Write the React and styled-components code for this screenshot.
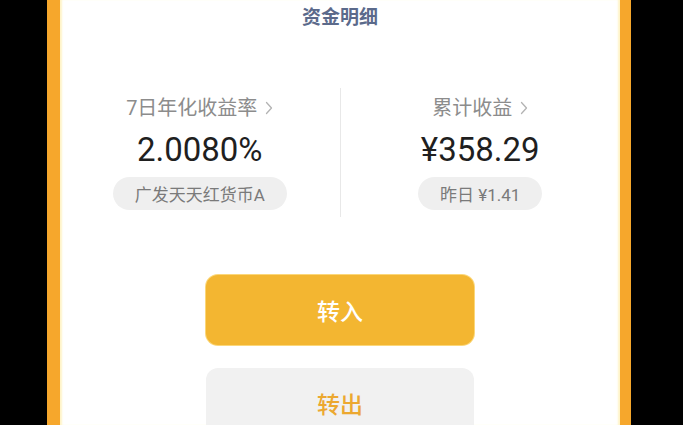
import React from 'react';
import styled, { createGlobalStyle } from 'styled-components';

const GlobalStyle = createGlobalStyle`
	html, body {
		margin: 0;
		padding: 0;
		background: #000;
		font-family: Roboto, "Noto Sans CJK SC", sans-serif;
	}
`;

const Chevron = () => (
	<svg width='8' height='14' viewBox='0 0 8 14'>
		<polyline
			points='1.5,1.5 6.5,7 1.5,12.5'
			fill='none'
			stroke='#b3b3b3'
			strokeWidth='1.3'
			strokeLinecap='round'
			strokeLinejoin='round'
		/>
	</svg>
);

const stats = [
	{ label: '7日年化收益率', value: '2.0080%', tag: '广发天天红货币A' },
	{ label: '累计收益', value: '¥358.29', tag: '昨日 ¥1.41' },
];

const App = () => {
	return (
		<>
			<GlobalStyle />
			<Screen>
				<Panel>
					<Title>资金明细</Title>
					<StatsRow>
						{stats.map((s, i) => (
							<React.Fragment key={s.label}>
								{i > 0 && <Divider />}
								<StatColumn>
									<Label>
										{s.label}
										<Chevron />
									</Label>
									<Value>{s.value}</Value>
									<Tag>{s.tag}</Tag>
								</StatColumn>
							</React.Fragment>
						))}
					</StatsRow>
					<Actions>
						<ActionButton primary>转入</ActionButton>
						<ActionButton>转出</ActionButton>
					</Actions>
				</Panel>
			</Screen>
		</>
	);
};

const Screen = styled.div`
	width: 683px;
	height: 425px;
	overflow: hidden;
	background: #000;
	display: flex;
`;

const Panel = styled.div`
	margin-left: 47px;
	width: 560px;
	height: 425px;
	flex-shrink: 0;
	background: #fff;
	border-left: 13px solid #f6a72c;
	border-right: 11px solid #f6a72c;
	box-shadow: inset 3px 0 2px -1px #fff4c8, inset -3px 0 2px -1px #fff4c8;
	display: flex;
	flex-direction: column;
	align-items: center;
`;

const Title = styled.div`
	margin-top: 6px;
	font-size: 19px;
	line-height: 24px;
	font-weight: 700;
	color: #5b6a8b;
`;

const StatsRow = styled.div`
	margin-top: 58px;
	width: 100%;
	display: flex;
	align-items: stretch;
`;

const Divider = styled.div`
	width: 1px;
	background: #e8e8e8;
	flex-shrink: 0;
`;

const StatColumn = styled.div`
	flex: 1;
	display: flex;
	flex-direction: column;
	align-items: center;
	padding: 8px 0 7px;
`;

const Label = styled.div`
	display: flex;
	align-items: center;
	gap: 8px;
	font-size: 20px;
	line-height: 24px;
	color: #8c8c8c;
`;

const Value = styled.div`
	margin-top: 10px;
	font-size: 33px;
	line-height: 40px;
	color: #1f1f1f;
`;

const Tag = styled.div`
	margin-top: 7px;
	height: 33px;
	padding: 0 22px;
	border-radius: 17px;
	background: #efefef;
	display: flex;
	align-items: center;
	font-size: 17px;
	color: #7a7a7a;
`;

const Actions = styled.div`
	margin-top: 58px;
	display: flex;
	flex-direction: column;
	gap: 23px;
`;

const ActionButton = styled.button`
	width: 268px;
	height: 70px;
	border: none;
	border-radius: 12px;
	font-family: inherit;
	font-size: 23px;
	font-weight: 500;
	color: ${(props) => (props.primary ? '#fff' : '#eca830')};
	background: ${(props) => (props.primary ? '#f3b631' : '#f1f1f1')};
	box-shadow: ${(props) =>
		props.primary ? '0 0 0 1px #fbd77a' : 'none'};
	cursor: pointer;
`;

export default App;
